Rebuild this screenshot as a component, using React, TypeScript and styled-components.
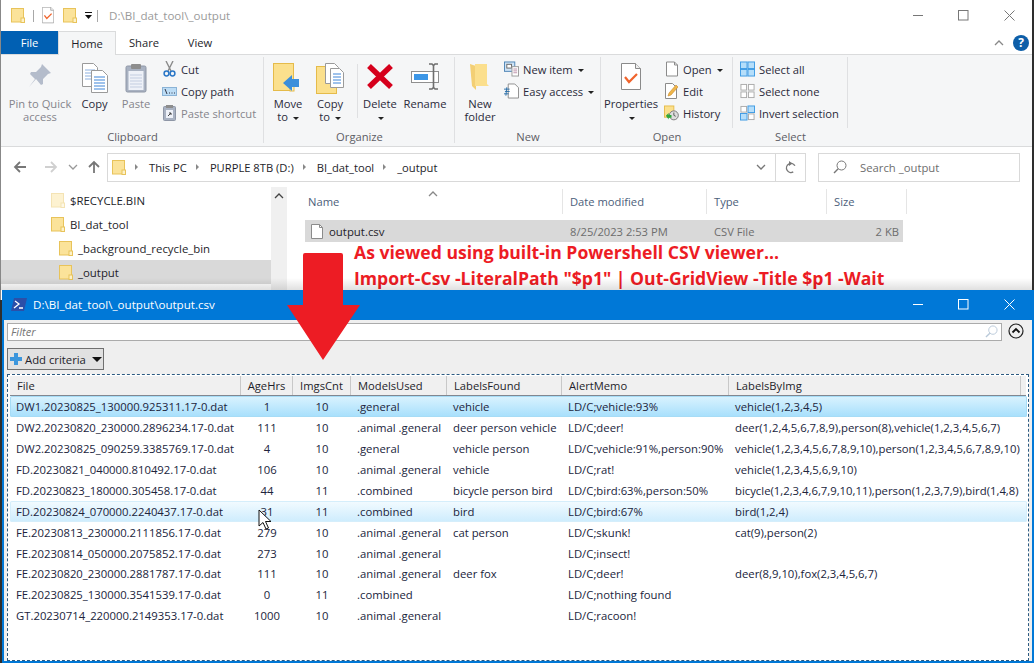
import React from "react";
import styled, { createGlobalStyle } from "styled-components";

const GlobalStyle = createGlobalStyle`
  html, body {
    margin: 0;
    padding: 0;
    background: #2e2e2e;
  }
  * {
    box-sizing: border-box;
  }
`;

const UI_FONT = `"Open Sans", "Noto Sans", sans-serif`;

const Desktop = styled.div`
  position: relative;
  width: 1034px;
  height: 663px;
  overflow: hidden;
  background: #2e2e2e;
  font-family: ${UI_FONT};
  font-size: 11.2px;
  color: #1e1e2a;
`;

const Explorer = styled.div`
  position: absolute;
  left: 0;
  top: 0;
  width: 1032px;
  height: 300px;
  background: #fff;
  border-left: 1px solid #888;
  display: flex;
  flex-direction: column;
`;

const TitleBar = styled.div`
  height: 31px;
  display: flex;
  align-items: center;
  padding-left: 10px;
  flex-shrink: 0;
`;

const TitleText = styled.span`
  color: #9b9b9b;
  font-size: 11.6px;
  margin-left: 6px;
`;

const TitleDivider = styled.span<{ $gap?: number }>`
  width: 1px;
  height: 12px;
  background: #a8a8a8;
  margin: 0 ${(p) => p.$gap ?? 10}px;
`;

const Spacer = styled.span<{ $w: number }>`
  width: ${(p) => p.$w}px;
  flex-shrink: 0;
`;

const WindowControls = styled.div`
  margin-left: auto;
  display: flex;
  color: #777;
  height: 31px;
`;

const ControlButton = styled.div`
  width: 45.5px;
  height: 31px;
  display: flex;
  align-items: center;
  justify-content: center;
`;

const TabBar = styled.div`
  height: 24px;
  display: flex;
  flex-shrink: 0;
  align-items: stretch;
  border-bottom: 1px solid #dadbdc;
  position: relative;
`;

const FileTab = styled.div`
  width: 57px;
  background: #0160b3;
  color: #fff;
  display: flex;
  align-items: center;
  justify-content: center;
  font-size: 11.2px;
`;

const Tab = styled.div<{ $active?: boolean }>`
  width: ${(p) => (p.$active ? 58 : 56)}px;
  display: flex;
  align-items: center;
  justify-content: center;
  margin-bottom: ${(p) => (p.$active ? -1 : 0)}px;
  background: ${(p) => (p.$active ? "#f5f6f7" : "transparent")};
  border: ${(p) => (p.$active ? "1px solid #dadbdc" : "none")};
  border-bottom: none;
`;

const HelpArea = styled.div`
  margin-left: auto;
  display: flex;
  align-items: center;
  gap: 9px;
  padding-right: 3px;
`;

const HelpBadge = styled.div`
  width: 16px;
  height: 16px;
  border-radius: 50%;
  background: #0d5ea8;
  color: #fff;
  font-weight: 700;
  font-size: 12px;
  line-height: 16px;
  text-align: center;
`;

const Ribbon = styled.div`
  height: 92px;
  flex-shrink: 0;
  background: #f5f6f7;
  border-bottom: 1px solid #dadbdc;
  display: flex;
  padding-top: 2px;
`;

const Group = styled.div<{ $w: number; $short?: boolean }>`
  width: ${(p) => p.$w}px;
  height: 86px;
  display: flex;
  flex-direction: column;
  background: linear-gradient(#dfe0e2, #dfe0e2) right top / 1px ${(p) => (p.$short ? 71 : 86)}px no-repeat;
`;

const GroupBody = styled.div<{ $pad?: number }>`
  flex: 1;
  display: flex;
  padding-left: ${(p) => p.$pad ?? 0}px;
  align-items: flex-start;
`;

const GroupLabel = styled.div`
  text-align: center;
  height: 13px;
  line-height: 13px;
  color: #5d5d65;
`;

const InnerDivider = styled.div`
  width: 1px;
  height: 54px;
  margin: 7px 0 0 6px;
  background: #dfe0e2;
`;

const BigButton = styled.div<{ $w: number; $dim?: boolean }>`
  width: ${(p) => p.$w}px;
  display: flex;
  flex-direction: column;
  align-items: center;
  text-align: center;
  line-height: 13px;
  color: ${(p) => (p.$dim ? "#85858c" : "#2a2a3a")};
`;

const BigIcon = styled.div`
  height: 40px;
  padding-top: 6px;
  display: flex;
  justify-content: center;
`;

const SmallColumn = styled.div<{ $ml?: number }>`
  display: flex;
  flex-direction: column;
  padding-top: 1px;
  margin-left: ${(p) => p.$ml ?? 0}px;
`;

const SmallButton = styled.div<{ $dim?: boolean }>`
  height: 22px;
  display: flex;
  align-items: center;
  gap: 4px;
  white-space: nowrap;
  color: ${(p) => (p.$dim ? "#85858c" : "#2a2a3a")};
`;

const IconSlot = styled.span`
  width: 15px;
  height: 16px;
  display: flex;
  align-items: center;
  justify-content: center;
  flex-shrink: 0;
`;

const Caret = styled.span`
  display: inline-block;
  width: 0;
  height: 0;
  border-left: 3px solid transparent;
  border-right: 3px solid transparent;
  border-top: 3px solid #222;
  margin-left: 2px;
  vertical-align: middle;
`;

const NavBar = styled.div`
  height: 40px;
  flex-shrink: 0;
  display: flex;
  align-items: center;
  position: relative;
  padding-left: 12px;
`;

const NavArrows = styled.div`
  width: 94px;
  display: flex;
  align-items: center;
`;

const AddressBar = styled.div`
  width: 699px;
  height: 29px;
  border: 1px solid #d9d9d9;
  display: flex;
  align-items: center;
  padding-left: 4px;
  gap: 9px;
  font-size: 11.2px;
`;

const Crumb = styled.span`
  white-space: nowrap;
`;

const CrumbSep = styled.span`
  width: 0;
  height: 0;
  margin-right: 2px;
  border-top: 3px solid transparent;
  border-bottom: 3px solid transparent;
  border-left: 3px solid #888;
`;

const AddressEnd = styled.div`
  margin-left: auto;
  display: flex;
  align-items: center;
  height: 100%;
`;

const RefreshBox = styled.div`
  width: 30px;
  height: 27px;
  border-left: 1px solid #d9d9d9;
  margin-left: 9px;
  display: flex;
  align-items: center;
  justify-content: center;
`;

const SearchBox = styled.div`
  width: 202px;
  height: 29px;
  margin-left: 12px;
  border: 1px solid #d9d9d9;
  display: flex;
  align-items: center;
  padding-left: 14px;
  gap: 13px;
  color: #6d6d6d;
  font-size: 11.3px;
`;

const ContentArea = styled.div`
  flex: 1;
  display: flex;
  min-height: 0;
`;

const Tree = styled.div`
  width: 270px;
  padding-top: 1px;
  display: flex;
  flex-direction: column;
`;

const TreeItem = styled.div<{ $indent: number; $selected?: boolean }>`
  height: 24px;
  display: flex;
  align-items: center;
  gap: 5px;
  padding-left: ${(p) => p.$indent}px;
  background: ${(p) => (p.$selected ? "#d9d9d9" : "transparent")};
  font-size: 11.4px;
`;

const TreeScroll = styled.div`
  width: 16px;
  background: #f0f0f0;
  display: flex;
  justify-content: center;
  padding-top: 6px;
`;

const FileList = styled.div`
  flex: 1;
  padding-left: 18px;
  display: flex;
  flex-direction: column;
`;

const ListHeader = styled.div`
  position: relative;
  display: grid;
  grid-template-columns: 258px 144px 120px 80px;
  width: 602px;
  height: 25px;
  margin-top: 2px;
`;

const HeaderCell = styled.div<{ $pad?: number }>`
  color: #4c607a;
  padding-left: ${(p) => p.$pad ?? 7}px;
  border-right: 1px solid #e5e5e5;
  display: flex;
  align-items: center;
  font-size: 11.2px;
`;

const SortMark = styled.span`
  position: absolute;
  left: 123px;
  top: -4px;
`;

const ListRow = styled.div`
  display: grid;
  grid-template-columns: 258px 144px 120px 76px;
  width: 598px;
  height: 22px;
  margin-top: 6px;
  background: #d9d9d9;
  align-items: center;
`;

const ListName = styled.div`
  display: flex;
  align-items: center;
  gap: 6px;
  padding-left: 6px;
  font-size: 11.4px;
`;

const ListMeta = styled.div<{ $right?: boolean }>`
  color: #6d6d6d;
  padding-left: 7px;
  padding-right: 4px;
  text-align: ${(p) => (p.$right ? "right" : "left")};
`;

const Annotation = styled.div`
  position: absolute;
  left: 354px;
  top: 239px;
  color: #ed1c24;
  font-family: "Open Sans", sans-serif;
  font-weight: 700;
  font-size: 17.6px;
  line-height: 26px;
  white-space: nowrap;
`;

const ShadowFade = styled.div`
  position: absolute;
  left: 0;
  right: 2px;
  top: 278px;
  height: 12px;
  background: linear-gradient(to bottom, rgba(0, 0, 0, 0), rgba(0, 0, 0, 0.12));
`;

const GridWindow = styled.div`
  position: absolute;
  left: 2px;
  top: 290px;
  width: 1032px;
  height: 373px;
  background: #efefef;
  border: 2px solid #0078d7;
  border-top: none;
  display: flex;
  flex-direction: column;
`;

const GridTitleBar = styled.div`
  height: 30px;
  flex-shrink: 0;
  margin: 0 -2px;
  background: #0078d7;
  color: #fff;
  display: flex;
  align-items: center;
  padding: 0 2px 2px 9px;
  gap: 6px;
  font-size: 11.6px;
`;

const GridControls = styled(WindowControls)`
  color: #fff;
  height: 28px;
  align-items: center;
`;

const FilterRow = styled.div`
  display: flex;
  align-items: center;
  height: 22px;
  padding: 2px 0 0 3px;
  flex-shrink: 0;
`;

const FilterInput = styled.div`
  width: 995px;
  height: 18px;
  background: #fff;
  border: 1px solid #ababab;
  display: flex;
  align-items: center;
  justify-content: space-between;
  padding: 0 3px 1px 3px;
  font-style: italic;
  color: #777;
  font-size: 11.2px;
`;

const CollapseButton = styled.div`
  margin-left: 6px;
`;

const CriteriaRow = styled.div`
  height: 26px;
  margin-top: 6px;
  padding-left: 3px;
  flex-shrink: 0;
`;

const CriteriaButton = styled.div`
  width: 97px;
  height: 22px;
  background: #e1e1e1;
  border: 1px solid #707070;
  display: flex;
  align-items: center;
  padding-left: 2px;
  gap: 3px;
  font-size: 11.3px;
`;

const CriteriaCaret = styled.span`
  width: 0;
  height: 0;
  border-left: 5px solid transparent;
  border-right: 5px solid transparent;
  border-top: 5px solid #111;
  margin-left: 3px;
`;

const TableFrame = styled.div`
  flex: 1;
  margin: 0 3px 0 3px;
  background: #fff;
  border: 1px dashed #2c5a80;
  padding: 1px 0 0 2px;
  display: flex;
  flex-direction: column;
  min-height: 0;
`;

const COLUMNS = "231px 52px 58px 96px 115px 167px 292px 1fr";

const TableHeader = styled.div`
  display: grid;
  grid-template-columns: ${COLUMNS};
  height: 20px;
  background: #f0f0f0;
  border-bottom: 1px solid #828790;
  margin-right: 2px;
  flex-shrink: 0;
`;

const ColumnHead = styled.div<{ $center?: boolean }>`
  display: flex;
  align-items: center;
  justify-content: ${(p) => (p.$center ? "center" : "flex-start")};
  padding-left: ${(p) => (p.$center ? 0 : 7)}px;
  border-right: 1px solid #c8c8c8;
  font-size: 11.2px;
`;

const RowBody = styled.div<{ $state?: "selected" | "hover" }>`
  display: grid;
  grid-template-columns: ${COLUMNS};
  height: 20.95px;
  margin-right: 1px;
  flex-shrink: 0;
  align-items: center;
  border-radius: 2px;
  color: #20243c;
  font-size: 11.32px;
  background: ${(p) =>
    p.$state === "selected"
      ? "linear-gradient(to bottom, #dbf3fe, #a6dffc)"
      : p.$state === "hover"
        ? "linear-gradient(to bottom, #f3fbff, #cdecfd)"
        : "transparent"};
  box-shadow: ${(p) =>
    p.$state === "selected"
      ? "inset 0 0 0 1px #a6dcf6"
      : p.$state === "hover"
        ? "inset 0 0 0 1px #d5eefb"
        : "none"};
`;

const Cell = styled.div<{ $center?: boolean }>`
  padding-left: ${(p) => (p.$center ? 0 : 6)}px;
  text-align: ${(p) => (p.$center ? "center" : "left")};
  white-space: nowrap;
  overflow: visible;
`;

const OverlayArrow = styled.svg`
  position: absolute;
  left: 284px;
  top: 250px;
`;

const Pointer = styled.svg`
  position: absolute;
  left: 258px;
  top: 509px;
`;

const FolderIcon = ({ size = 14, pale = false }: { size?: number; pale?: boolean }) => (
  <svg width={size} height={size + 1} viewBox="0 0 14 15" style={{ opacity: pale ? 0.45 : 1 }}>
    <rect x="0.5" y="0.5" width="12" height="13.5" fill="#fbe39a" stroke="#e8c35a" />
    <rect x="10" y="10" width="3.5" height="4.5" fill="#fdf1c8" stroke="#e8c35a" />
  </svg>
);

const CheckDoc = ({ size = 20 }: { size?: number }) => (
  <svg width={size} height={size * 1.35} viewBox="0 0 20 27">
    <path d="M.5.5h14l5 5v21H.5z" fill="#fff" stroke="#8a8a8a" />
    <path d="M14.5.5v5h5" fill="#eee" stroke="#8a8a8a" />
    <path d="M4 14l4 5 8-8" fill="none" stroke="#f0642c" strokeWidth="2.2" />
  </svg>
);

const DocIcon = ({ w = 12, h = 15 }: { w?: number; h?: number }) => (
  <svg width={w} height={h} viewBox="0 0 12 15">
    <path d="M.5.5h8l3 3v11H.5z" fill="#fff" stroke="#8b8b8b" />
    <path d="M8.5.5v3h3" fill="none" stroke="#8b8b8b" />
  </svg>
);

const PinIcon = () => (
  <svg width="24" height="26" viewBox="0 0 24 26">
    <path d="M14 1l9 9-3 1-5 5 0 5-2 1-5-6-7 8 6-8-5-5 1-2h5l5-5z" fill="#b4bccb" />
  </svg>
);

const CopyIcon = () => (
  <svg width="26" height="30" viewBox="0 0 26 30">
    <path d="M.5.5h11l4 4v19H.5z" fill="#fff" stroke="#9a9a9a" />
    <path d="M3 7h10M3 10h10M3 13h10M3 16h10" stroke="#8cb0e0" />
    <path d="M9.5 7.5h11l5 5v17h-16z" fill="#fff" stroke="#9a9a9a" />
    <path d="M12 14h11M12 17h11M12 20h11M12 23h11M12 26h11" stroke="#3f85d8" />
  </svg>
);

const PasteIcon = () => (
  <svg width="22" height="30" viewBox="0 0 22 30">
    <rect x="1" y="3" width="20" height="26" rx="1.5" fill="#a9b2c2" stroke="#8e96a6" />
    <rect x="3.5" y="8" width="15" height="19" fill="#eef1f8" />
    <path d="M5 12h12M5 15h12M5 18h12M5 21h12M5 24h12" stroke="#c3cde0" />
    <rect x="6" y="1" width="10" height="5" rx="1" fill="#8d8d8d" />
  </svg>
);

const CutIcon = () => (
  <svg width="13" height="16" viewBox="0 0 13 16">
    <path d="M3 0l5 10M10 0L5 10" stroke="#8b8b8b" strokeWidth="1.4" />
    <circle cx="3.5" cy="12.5" r="2.4" fill="none" stroke="#2a76c6" strokeWidth="1.5" />
    <circle cx="9.5" cy="12.5" r="2.4" fill="none" stroke="#2a76c6" strokeWidth="1.5" />
  </svg>
);

const PathIcon = () => (
  <svg width="15" height="9" viewBox="0 0 15 9">
    <rect x=".5" y=".5" width="14" height="8" fill="#bcdcf5" stroke="#8bb3d6" />
    <path d="M3 2l2 5M7 6h1M9.5 6h1M12 6h1" stroke="#223" strokeWidth="0.9" />
  </svg>
);

const ShortcutIcon = () => (
  <svg width="13" height="16" viewBox="0 0 13 16">
    <rect x=".5" y="1.5" width="12" height="14" rx="1" fill="#a9b2c2" stroke="#8e96a6" />
    <rect x="3" y="0" width="7" height="3" fill="#8d8d8d" />
    <rect x="3" y="5" width="7" height="8" fill="#eef1f8" />
    <path d="M5 11l3-3M6 8h2v2" stroke="#444" fill="none" />
  </svg>
);

const MoveIcon = () => (
  <svg width="30" height="29" viewBox="0 0 30 29">
    <rect x=".5" y=".5" width="20" height="27" fill="#fbe08d" stroke="#e5bb4a" />
    <rect x="17" y="21" width="4" height="7" fill="#fdf1c8" stroke="#e5bb4a" />
    <path d="M10 21l9-8v4h7v8h-7v4z" fill="#3c8fdb" transform="translate(0,-1)" />
  </svg>
);

const CopyToIcon = () => (
  <svg width="28" height="32" viewBox="0 0 28 32">
    <rect x=".5" y="3.5" width="20" height="27" fill="#fbe08d" stroke="#e5bb4a" />
    <path d="M9.5.5h9l4 4v16h-13z" fill="#fff" stroke="#9a9a9a" />
    <path d="M14.5 5.5h9l4 4v15h-13z" fill="#fff" stroke="#9a9a9a" />
    <path d="M17 11h8M17 14h8M17 17h8M17 20h8" stroke="#3f85d8" />
  </svg>
);

const DeleteIcon = () => (
  <svg width="28" height="27" viewBox="0 0 28 27">
    <path d="M3 3l22 21M25 3L3 24" stroke="#d6001c" strokeWidth="5.5" />
  </svg>
);

const RenameIcon = () => (
  <svg width="29" height="27" viewBox="0 0 29 27">
    <rect x=".5" y="8.5" width="27" height="11" fill="#fff" stroke="#8f8f8f" />
    <rect x="3" y="11" width="14" height="6" fill="#3c96e6" />
    <path d="M18 1h3l1.5 1.5L24 1h3M22.5 2v23M18 26h3l1.5-1.5L24 26h3" stroke="#6e6e6e" strokeWidth="1.6" fill="none" />
  </svg>
);

const NewFolderIcon = () => (
  <svg width="20" height="28" viewBox="0 0 20 28">
    <path d="M0 1l6 2v24l-4-4z" fill="#f3cf74" />
    <path d="M5 1h12v20l2 2H5z" fill="#fbdf8d" />
  </svg>
);

const NewItemIcon = () => (
  <svg width="16" height="16" viewBox="0 0 16 16">
    <rect x=".5" y=".5" width="11" height="10" fill="#cfe3f5" stroke="#4d84b5" />
    <rect x="3" y="3" width="5" height="4" fill="#fff" stroke="#666" />
    <rect x="8.5" y="5.5" width="7" height="10" fill="#fff" stroke="#999" />
    <path d="M10 8h4M10 10h4M10 12h4" stroke="#bb8fa8" />
  </svg>
);

const EasyAccessIcon = () => (
  <svg width="16" height="16" viewBox="0 0 16 16">
    <path d="M4.5.5h7l4 4v11h-11z" fill="#fff" stroke="#8b8b8b" />
    <path d="M0 6h6M1 8.5h5M0 11h5M3 4l-1 9" stroke="#2a6ea8" fill="none" />
  </svg>
);

const EditIcon = () => (
  <svg width="13" height="16" viewBox="0 0 13 16">
    <path d="M.5.5h7l4 4v11H.5z" fill="#fff" stroke="#8b8b8b" />
    <path d="M3 13l1-3 7-8 2 2-7 8z" fill="#eeb64a" stroke="#c9882c" strokeWidth=".6" />
  </svg>
);

const HistoryIcon = () => (
  <svg width="16" height="16" viewBox="0 0 16 16">
    <rect x=".5" y=".5" width="10" height="12" fill="#fbe08d" stroke="#e5bb4a" />
    <circle cx="10.5" cy="10.5" r="4.8" fill="#ddd" stroke="#777" />
    <path d="M10.5 7.5v3l2 1" stroke="#555" fill="none" />
    <path d="M2 11l3-3v2h3v3H5v2z" fill="#2ea83a" />
  </svg>
);

const SelectIcon = ({ mode }: { mode: "all" | "none" | "invert" }) => {
  const spots = [
    [1, 1],
    [9, 1],
    [1, 9],
    [9, 9],
  ];
  const isBlue = (i: number) => (mode === "all" ? true : mode === "none" ? false : i === 1 || i === 2);
  return (
    <svg width="16" height="16" viewBox="0 0 16 16">
      {spots.map(([x, y], i) => (
        <rect
          key={i}
          x={x - (isBlue(i) ? 0.5 : 0)}
          y={y - (isBlue(i) ? 0.5 : 0)}
          width={isBlue(i) ? 7 : 6}
          height={isBlue(i) ? 7 : 6}
          fill={isBlue(i) ? "#b5defa" : "#fff"}
          stroke={isBlue(i) ? "#3c9ae4" : "#aaa"}
        />
      ))}
    </svg>
  );
};

const NavArrow = ({ dir, color }: { dir: "left" | "right" | "up"; color: string }) => {
  const rot = dir === "left" ? 0 : dir === "right" ? 180 : 90;
  return (
    <svg width="14" height="14" viewBox="0 0 14 14" style={{ transform: `rotate(${rot}deg)` }}>
      <path d="M13 7H2M7 2L2 7l5 5" fill="none" stroke={color} strokeWidth="1.8" />
    </svg>
  );
};

const Chevron = ({ up = false, color = "#666" }: { up?: boolean; color?: string }) => (
  <svg width="10" height="6" viewBox="0 0 10 6" style={{ transform: up ? "rotate(180deg)" : undefined }}>
    <path d="M1 1l4 4 4-4" fill="none" stroke={color} strokeWidth="1.3" />
  </svg>
);

const MagIcon = ({ color = "#777", size = 14 }: { color?: string; size?: number }) => (
  <svg width={size} height={size} viewBox="0 0 14 14">
    <circle cx="8.5" cy="5.5" r="4.5" fill="none" stroke={color} />
    <path d="M5.2 8.8L1 13" stroke={color} strokeWidth="1.4" />
  </svg>
);

const Minimize = ({ color }: { color: string }) => (
  <svg width="11" height="11" viewBox="0 0 11 11">
    <path d="M0 5.5h10" stroke={color} />
  </svg>
);
const Maximize = ({ color }: { color: string }) => (
  <svg width="11" height="11" viewBox="0 0 11 11">
    <rect x=".5" y=".5" width="9.5" height="9.5" fill="none" stroke={color} />
  </svg>
);
const CloseX = ({ color }: { color: string }) => (
  <svg width="11" height="11" viewBox="0 0 11 11">
    <path d="M.5.5l10 10M10.5.5l-10 10" stroke={color} />
  </svg>
);

const rows: string[][] = [
  ["DW1.20230825_130000.925311.17-0.dat", "1", "10", ".general", "vehicle", "LD/C;vehicle:93%", "vehicle(1,2,3,4,5)"],
  ["DW2.20230820_230000.2896234.17-0.dat", "111", "10", ".animal .general", "deer person vehicle", "LD/C;deer!", "deer(1,2,4,5,6,7,8,9),person(8),vehicle(1,2,3,4,5,6,7)"],
  ["DW2.20230825_090259.3385769.17-0.dat", "4", "10", ".general", "vehicle person", "LD/C;vehicle:91%,person:90%", "vehicle(1,2,3,4,5,6,7,8,9,10),person(1,2,3,4,5,6,7,8,9,10)"],
  ["FD.20230821_040000.810492.17-0.dat", "106", "10", ".animal .general", "vehicle", "LD/C;rat!", "vehicle(1,2,3,4,5,6,9,10)"],
  ["FD.20230823_180000.305458.17-0.dat", "44", "11", ".combined", "bicycle person bird", "LD/C;bird:63%,person:50%", "bicycle(1,2,3,4,6,7,9,10,11),person(1,2,3,7,9),bird(1,4,8)"],
  ["FD.20230824_070000.2240437.17-0.dat", "31", "11", ".combined", "bird", "LD/C;bird:67%", "bird(1,2,4)"],
  ["FE.20230813_230000.2111856.17-0.dat", "279", "10", ".animal .general", "cat person", "LD/C;skunk!", "cat(9),person(2)"],
  ["FE.20230814_050000.2075852.17-0.dat", "273", "10", ".animal .general", "", "LD/C;insect!", ""],
  ["FE.20230820_230000.2881787.17-0.dat", "111", "10", ".animal .general", "deer fox", "LD/C;deer!", "deer(8,9,10),fox(2,3,4,5,6,7)"],
  ["FE.20230825_130000.3541539.17-0.dat", "0", "11", ".combined", "", "LD/C;nothing found", ""],
  ["GT.20230714_220000.2149353.17-0.dat", "1000", "10", ".animal .general", "", "LD/C;racoon!", ""],
];

const heads = ["File", "AgeHrs", "ImgsCnt", "ModelsUsed", "LabelsFound", "AlertMemo", "LabelsByImg"];

const App = () => {
  return (
    <Desktop>
      <GlobalStyle />
      <Explorer>
        <TitleBar>
          <FolderIcon />
          <TitleDivider $gap={8} />
          <CheckDoc size={12} />
          <Spacer $w={9} />
          <FolderIcon />
          <Spacer $w={8} />
          <svg width="7" height="8" viewBox="0 0 7 8">
            <path d="M0 0h7v1H0zM0 3h7L3.5 7z" fill="#111" />
          </svg>
          <TitleDivider $gap={5} />
          <TitleText>D:\BI_dat_tool\_output</TitleText>
          <WindowControls>
            <ControlButton>
              <Minimize color="#777" />
            </ControlButton>
            <ControlButton>
              <Maximize color="#777" />
            </ControlButton>
            <ControlButton>
              <CloseX color="#777" />
            </ControlButton>
          </WindowControls>
        </TitleBar>
        <TabBar>
          <FileTab>File</FileTab>
          <Tab $active>Home</Tab>
          <Tab>Share</Tab>
          <Tab>View</Tab>
          <HelpArea>
            <Chevron up color="#888" />
            <HelpBadge>?</HelpBadge>
          </HelpArea>
        </TabBar>
        <Ribbon>
          <Group $w={263}>
            <GroupBody>
              <BigButton $w={78} $dim>
                <BigIcon>
                  <PinIcon />
                </BigIcon>
                <span>
                  Pin to Quick
                  <br />
                  access
                </span>
              </BigButton>
              <BigButton $w={31}>
                <BigIcon>
                  <CopyIcon />
                </BigIcon>
                Copy
              </BigButton>
              <BigButton $w={52} $dim>
                <BigIcon>
                  <PasteIcon />
                </BigIcon>
                Paste
              </BigButton>
              <SmallColumn>
                <SmallButton>
                  <IconSlot>
                    <CutIcon />
                  </IconSlot>
                  Cut
                </SmallButton>
                <SmallButton>
                  <IconSlot>
                    <PathIcon />
                  </IconSlot>
                  Copy path
                </SmallButton>
                <SmallButton $dim>
                  <IconSlot>
                    <ShortcutIcon />
                  </IconSlot>
                  Paste shortcut
                </SmallButton>
              </SmallColumn>
            </GroupBody>
            <GroupLabel>Clipboard</GroupLabel>
          </Group>
          <Group $w={191}>
            <GroupBody $pad={3}>
              <BigButton $w={42}>
                <BigIcon>
                  <MoveIcon />
                </BigIcon>
                <span>
                  Move
                  <br />
                  to <Caret />
                </span>
              </BigButton>
              <BigButton $w={42}>
                <BigIcon>
                  <CopyToIcon />
                </BigIcon>
                <span>
                  Copy
                  <br />
                  to <Caret />
                </span>
              </BigButton>
              <InnerDivider />
              <BigButton $w={44}>
                <BigIcon>
                  <DeleteIcon />
                </BigIcon>
                <span>
                  Delete
                  <br />
                  <Caret />
                </span>
              </BigButton>
              <BigButton $w={46}>
                <BigIcon>
                  <RenameIcon />
                </BigIcon>
                Rename
              </BigButton>
            </GroupBody>
            <GroupLabel>Organize</GroupLabel>
          </Group>
          <Group $w={146}>
            <GroupBody $pad={6}>
              <BigButton $w={38}>
                <BigIcon>
                  <NewFolderIcon />
                </BigIcon>
                <span>
                  New
                  <br />
                  folder
                </span>
              </BigButton>
              <SmallColumn $ml={5}>
                <SmallButton>
                  <IconSlot>
                    <NewItemIcon />
                  </IconSlot>
                  <span>
                    New item <Caret />
                  </span>
                </SmallButton>
                <SmallButton>
                  <IconSlot>
                    <EasyAccessIcon />
                  </IconSlot>
                  <span>
                    Easy access <Caret />
                  </span>
                </SmallButton>
              </SmallColumn>
            </GroupBody>
            <GroupLabel>New</GroupLabel>
          </Group>
          <Group $w={132} $short>
            <GroupBody $pad={2}>
              <BigButton $w={56}>
                <BigIcon>
                  <CheckDoc />
                </BigIcon>
                <span>
                  Properties
                  <br />
                  <Caret />
                </span>
              </BigButton>
              <SmallColumn $ml={5}>
                <SmallButton>
                  <IconSlot>
                    <DocIcon w={12} h={16} />
                  </IconSlot>
                  <span>
                    Open <Caret />
                  </span>
                </SmallButton>
                <SmallButton>
                  <IconSlot>
                    <EditIcon />
                  </IconSlot>
                  Edit
                </SmallButton>
                <SmallButton>
                  <IconSlot>
                    <HistoryIcon />
                  </IconSlot>
                  History
                </SmallButton>
              </SmallColumn>
            </GroupBody>
            <GroupLabel>Open</GroupLabel>
          </Group>
          <Group $w={115} $short>
            <GroupBody $pad={7}>
              <SmallColumn>
                <SmallButton>
                  <IconSlot>
                    <SelectIcon mode="all" />
                  </IconSlot>
                  Select all
                </SmallButton>
                <SmallButton>
                  <IconSlot>
                    <SelectIcon mode="none" />
                  </IconSlot>
                  Select none
                </SmallButton>
                <SmallButton>
                  <IconSlot>
                    <SelectIcon mode="invert" />
                  </IconSlot>
                  Invert selection
                </SmallButton>
              </SmallColumn>
            </GroupBody>
            <GroupLabel>Select</GroupLabel>
          </Group>
        </Ribbon>
        <NavBar>
          <NavArrows>
            <NavArrow dir="left" color="#777" />
            <Spacer $w={17} />
            <NavArrow dir="right" color="#d0d0d0" />
            <Spacer $w={10} />
            <Chevron color="#999" />
            <Spacer $w={9} />
            <NavArrow dir="up" color="#777" />
          </NavArrows>
          <AddressBar>
            <FolderIcon />
            <CrumbSep />
            <Crumb>This PC</Crumb>
            <CrumbSep />
            <Crumb>PURPLE 8TB (D:)</Crumb>
            <CrumbSep />
            <Crumb>BI_dat_tool</Crumb>
            <CrumbSep />
            <Crumb>_output</Crumb>
            <AddressEnd>
              <Chevron color="#777" />
              <RefreshBox>
                <svg width="12" height="13" viewBox="0 0 12 13">
                  <path d="M6 2.5a4.5 4.5 0 1 0 4.5 4.5" fill="none" stroke="#777" strokeWidth="1.4" transform="rotate(60 6 7)" />
                  <path d="M4 0v5l3.5-2.5z" fill="#777" />
                </svg>
              </RefreshBox>
            </AddressEnd>
          </AddressBar>
          <SearchBox>
            <MagIcon />
            Search _output
          </SearchBox>
        </NavBar>
        <ContentArea>
          <Tree>
            <TreeItem $indent={50}>
              <FolderIcon pale />
              $RECYCLE.BIN
            </TreeItem>
            <TreeItem $indent={50}>
              <FolderIcon />
              BI_dat_tool
            </TreeItem>
            <TreeItem $indent={58}>
              <FolderIcon />
              _background_recycle_bin
            </TreeItem>
            <TreeItem $indent={58} $selected>
              <FolderIcon />
              _output
            </TreeItem>
          </Tree>
          <TreeScroll>
            <Chevron up color="#444" />
          </TreeScroll>
          <FileList>
            <ListHeader>
              <HeaderCell $pad={3}>Name</HeaderCell>
              <HeaderCell>Date modified</HeaderCell>
              <HeaderCell>Type</HeaderCell>
              <HeaderCell>Size</HeaderCell>
              <SortMark>
                <Chevron up color="#888" />
              </SortMark>
            </ListHeader>
            <ListRow>
              <ListName>
                <DocIcon />
                output.csv
              </ListName>
              <ListMeta>8/25/2023 2:53 PM</ListMeta>
              <ListMeta>CSV File</ListMeta>
              <ListMeta $right>2 KB</ListMeta>
            </ListRow>
          </FileList>
        </ContentArea>
      </Explorer>
      <Annotation>
        As viewed using built-in Powershell CSV viewer...
        <br />
        Import-Csv -LiteralPath "$p1" | Out-GridView -Title $p1 -Wait
      </Annotation>
      <ShadowFade />
      <GridWindow>
        <GridTitleBar>
          <svg width="16" height="13" viewBox="0 0 16 13">
            <path d="M3 0h13l-3 13H0z" fill="#2b4fa8" />
            <path d="M4 3l4 3-5 4M8 10h4" fill="none" stroke="#fff" strokeWidth="1.3" />
          </svg>
          D:\BI_dat_tool\_output\output.csv
          <GridControls>
            <ControlButton>
              <Minimize color="#fff" />
            </ControlButton>
            <ControlButton>
              <Maximize color="#fff" />
            </ControlButton>
            <ControlButton>
              <CloseX color="#fff" />
            </ControlButton>
          </GridControls>
        </GridTitleBar>
        <FilterRow>
          <FilterInput>
            Filter
            <MagIcon color="#b8c8d8" size={13} />
          </FilterInput>
          <CollapseButton>
            <svg width="16" height="16" viewBox="0 0 16 16">
              <circle cx="8" cy="8" r="7" fill="none" stroke="#222" strokeWidth="1.2" />
              <path d="M4.5 9.5L8 6l3.5 3.5" fill="none" stroke="#111" strokeWidth="1.8" />
            </svg>
          </CollapseButton>
        </FilterRow>
        <CriteriaRow>
          <CriteriaButton>
            <svg width="12" height="12" viewBox="0 0 12 12">
              <path d="M4 0h4v4h4v4H8v4H4V8H0V4h4z" fill="#3c96dc" />
            </svg>
            Add criteria
            <CriteriaCaret />
          </CriteriaButton>
        </CriteriaRow>
        <TableFrame>
          <TableHeader>
            {heads.map((h, i) => (
              <ColumnHead key={h} $center={i === 1 || i === 2}>
                {h}
              </ColumnHead>
            ))}
          </TableHeader>
          {rows.map((r, i) => (
            <RowBody key={r[0]} $state={i === 0 ? "selected" : i === 5 ? "hover" : undefined}>
              {r.map((c, j) => (
                <Cell key={j} $center={j === 1 || j === 2}>
                  {c}
                </Cell>
              ))}
            </RowBody>
          ))}
        </TableFrame>
      </GridWindow>
      <OverlayArrow width="80" height="114" viewBox="0 0 80 114">
        <path d="M21 3h36a2 2 0 0 1 2 2v50h17L39 110 3 55h16V5a2 2 0 0 1 2-2z" fill="#ed1c24" />
      </OverlayArrow>
      <Pointer width="14" height="22" viewBox="0 0 14 22">
        <path d="M1 1v16l4-3.5 3 6.5 2.5-1-3-6.5H13z" fill="#fff" stroke="#111" />
      </Pointer>
    </Desktop>
  );
};

export default App;
